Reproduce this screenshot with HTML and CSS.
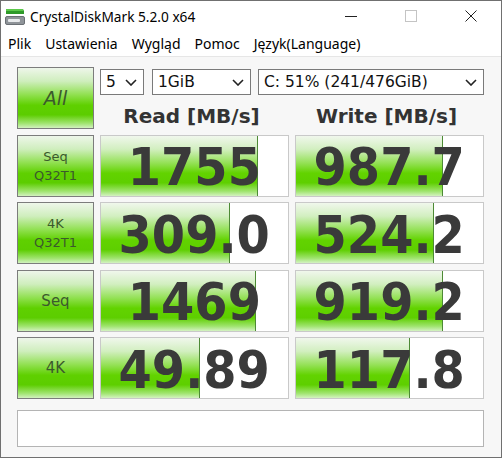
FILE: index.html
```html
<!DOCTYPE html>
<html lang="pl">
<head>
  <meta charset="UTF-8" />
  <title>CrystalDiskMark 5.2.0 x64</title>
  <link rel="stylesheet" href="styles.css">
</head>
<body>

<div class="window">
  <div class="titlebar">
    <svg class="app-icon" width="20" height="17" viewBox="0 0 20 17">
      <path d="M1 1 H18 L19 3 V6 H1 Z" fill="#2f9a2a"/>
      <rect x="1" y="1" width="17" height="2" fill="#5cc84a"/>
      <rect x="0.5" y="8.5" width="19" height="8" rx="1.5" fill="#8f9499" stroke="#6b7075"/>
      <rect x="3" y="11" width="12" height="3" rx="1" fill="#e8eaec"/>
    </svg>
    <span class="title">CrystalDiskMark 5.2.0 x64</span>
    <div class="controls">
      <span class="ctl">
        <svg width="12" height="12" viewBox="0 0 12 12"><path d="M0 6.5 H12" stroke="#222" stroke-width="1"/></svg>
      </span>
      <span class="ctl">
        <svg width="12" height="12" viewBox="0 0 12 12"><rect x="0.5" y="0.5" width="11" height="11" fill="none" stroke="#c4c4c4"/></svg>
      </span>
      <span class="ctl">
        <svg width="12" height="12" viewBox="0 0 12 12"><path d="M0.5 0.5 L11.5 11.5 M11.5 0.5 L0.5 11.5" stroke="#222" stroke-width="1"/></svg>
      </span>
    </div>
  </div>

  <div class="menubar">
    <span class="menu-item">Plik</span>
    <span class="menu-item">Ustawienia</span>
    <span class="menu-item">Wygląd</span>
    <span class="menu-item">Pomoc</span>
    <span class="menu-item">Język(Language)</span>
  </div>

  <div class="content">
    <div class="btn btn-all">All</div>
    <div class="top-panel">
      <div class="selects">
        <div class="combo combo-count"><span>5</span><svg width="12" height="7" viewBox="0 0 12 7"><path d="M1 1 L6 6 L11 1" fill="none" stroke="#222" stroke-width="1.6"/></svg></div>
        <div class="combo combo-size"><span>1GiB</span><svg width="12" height="7" viewBox="0 0 12 7"><path d="M1 1 L6 6 L11 1" fill="none" stroke="#222" stroke-width="1.6"/></svg></div>
        <div class="combo combo-drive"><span>C: 51% (241/476GiB)</span><svg width="12" height="7" viewBox="0 0 12 7"><path d="M1 1 L6 6 L11 1" fill="none" stroke="#222" stroke-width="1.6"/></svg></div>
      </div>
      <div class="headers">
        <div class="head">Read [MB/s]</div>
        <div class="head">Write [MB/s]</div>
      </div>
    </div>

    <div class="btn btn-two">Seq<br>Q32T1</div>
    <div class="meter"><div class="fill" style="width:157px"></div><span class="value">1755</span></div>
    <div class="meter"><div class="fill" style="width:147px"></div><span class="value">987.7</span></div>

    <div class="btn btn-two">4K<br>Q32T1</div>
    <div class="meter"><div class="fill" style="width:129px"></div><span class="value">309.0</span></div>
    <div class="meter"><div class="fill" style="width:138px"></div><span class="value">524.2</span></div>

    <div class="btn btn-one">Seq</div>
    <div class="meter"><div class="fill" style="width:155px"></div><span class="value">1469</span></div>
    <div class="meter"><div class="fill" style="width:147px"></div><span class="value">919.2</span></div>

    <div class="btn btn-one">4K</div>
    <div class="meter"><div class="fill" style="width:99px"></div><span class="value">49.89</span></div>
    <div class="meter"><div class="fill" style="width:114px"></div><span class="value">117.8</span></div>

    <div class="comment"></div>
  </div>
</div>

</body>
</html>
```

FILE: styles.css
```css
* { box-sizing: border-box; }
body {
  margin: 0;
  width: 502px;
  height: 458px;
  overflow: hidden;
  font-family: 'Noto Sans', 'DejaVu Sans', sans-serif;
  color: #111;
}
.window {
  width: 502px;
  height: 458px;
  border: 1px solid #707070;
  background: #f7f7f7;
}
.titlebar {
  height: 30px;
  background: #fff;
  display: flex;
  align-items: center;
}
.app-icon {
  margin-left: 4px;
  margin-top: 1px;
}
.title {
  margin-left: 5px;
  font-size: 13.7px;
  color: #000;
}
.controls {
  margin-left: auto;
  display: flex;
  height: 100%;
}
.ctl {
  width: 60px;
  display: flex;
  align-items: center;
  justify-content: center;
}
.menubar {
  height: 26px;
  background: #fff;
  border-bottom: 1px solid #e6e6e6;
  display: flex;
  align-items: center;
}
.menu-item {
  font-size: 14px;
  padding: 0 7px;
  color: #000;
}
.content {
  display: grid;
  grid-template-columns: 77px 189px 189px;
  grid-auto-rows: 62px;
  column-gap: 6px;
  row-gap: 5.5px;
  padding: 10px 0 0 16px;
}
.btn {
  border: 1px solid #7c7c7c;
  background: linear-gradient(to bottom, #eef6ea 0%, #cfeebd 22%, #8fe04e 45%, #5fd000 62%, #5ccd00 78%, #9fe46e 92%, #d2f1bf 100%);
  color: #3b5a2c;
  display: flex;
  align-items: center;
  justify-content: center;
  text-align: center;
  font-family: 'DejaVu Sans', sans-serif;
}
.btn-all {
  font-size: 19px;
  font-style: italic;
}
.btn-two {
  font-size: 13px;
  line-height: 19px;
}
.btn-one {
  font-size: 15px;
}
.top-panel {
  grid-column: 2 / 4;
  display: flex;
  flex-direction: column;
}
.selects {
  display: flex;
  margin-top: 2px;
  height: 26px;
}
.combo {
  height: 26px;
  border: 1px solid #7a7a7a;
  background: #fff;
  display: flex;
  align-items: center;
  justify-content: space-between;
  padding: 0 6px 0 5px;
  font-family: 'DejaVu Sans', sans-serif;
  font-size: 15.5px;
  color: #111;
}
.combo-count { width: 44px; }
.combo-size { width: 99px; margin-left: 8px; }
.combo-drive { width: 226px; margin-left: 7px; }
.headers {
  display: flex;
  column-gap: 6px;
  margin-top: 9px;
}
.head {
  width: 189px;
  text-align: center;
  font-family: 'DejaVu Sans', sans-serif;
  font-weight: bold;
  font-size: 20px;
  color: #333;
  padding-right: 6px;
}
.meter {
  position: relative;
  border: 1px solid #c9c9c9;
  background: #fff;
  display: flex;
  align-items: center;
  justify-content: center;
  overflow: hidden;
}
.fill {
  position: absolute;
  left: 0;
  top: 0;
  bottom: 0;
  border-right: 1px solid #4d8a35;
  background: linear-gradient(to bottom, #f0f7ec 0%, #d2efc0 22%, #94e156 45%, #62d300 62%, #5ecf00 78%, #9fe46e 92%, #d4f2c2 100%);
}
.value {
  position: relative;
  display: inline-block;
  font-family: 'DejaVu Sans', sans-serif;
  font-weight: bold;
  font-size: 52px;
  line-height: 1;
  color: #3a3a3a;
  transform: scaleX(0.92);
  margin-top: 3px;
}
.comment {
  grid-column: 1 / 4;
  height: 37px;
  margin-top: 5.5px;
  border: 1px solid #b4b4b4;
  background: #fff;
}
```
